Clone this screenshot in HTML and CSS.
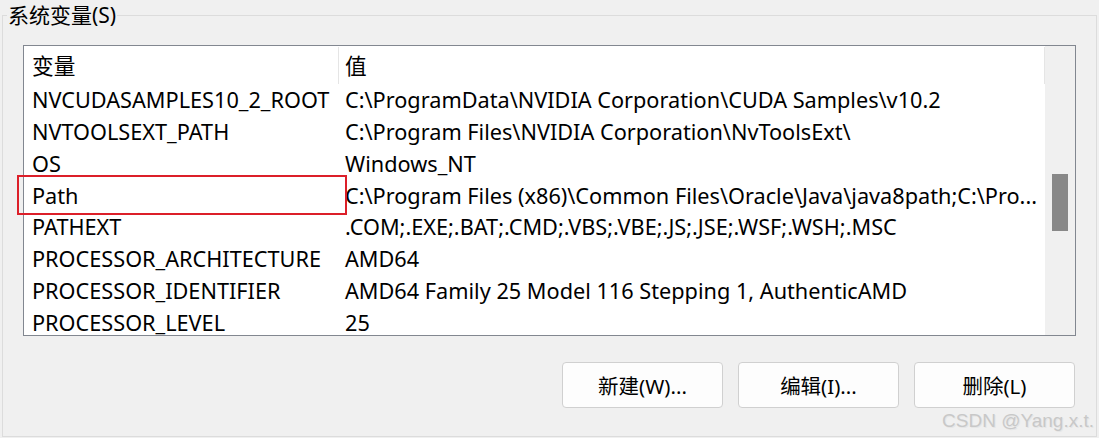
FILE: index.html
```html
<!DOCTYPE html>
<html lang="zh-CN">
<head>
<meta charset="utf-8">
<title>系统变量</title>
<link rel="stylesheet" href="styles.css">
</head>
<body>
<fieldset class="group">
  <legend class="group-title">系统变量(S)</legend>
  <div class="listview">
    <div class="lv-main">
      <div class="lv-header">
        <div class="cell col-name">变量</div>
        <div class="cell col-value">值</div>
      </div>
      <div class="lv-body">
        <div class="row"><div class="cell col-name">NVCUDASAMPLES10_2_ROOT</div><div class="cell col-value">C:\ProgramData\NVIDIA Corporation\CUDA Samples\v10.2</div></div>
        <div class="row"><div class="cell col-name">NVTOOLSEXT_PATH</div><div class="cell col-value">C:\Program Files\NVIDIA Corporation\NvToolsExt\</div></div>
        <div class="row"><div class="cell col-name">OS</div><div class="cell col-value">Windows_NT</div></div>
        <div class="row"><div class="cell col-name">Path</div><div class="cell col-value">C:\Program Files (x86)\Common Files\Oracle\Java\java8path;C:\Pro...</div></div>
        <div class="row"><div class="cell col-name">PATHEXT</div><div class="cell col-value">.COM;.EXE;.BAT;.CMD;.VBS;.VBE;.JS;.JSE;.WSF;.WSH;.MSC</div></div>
        <div class="row"><div class="cell col-name">PROCESSOR_ARCHITECTURE</div><div class="cell col-value">AMD64</div></div>
        <div class="row"><div class="cell col-name">PROCESSOR_IDENTIFIER</div><div class="cell col-value">AMD64 Family 25 Model 116 Stepping 1, AuthenticAMD</div></div>
        <div class="row"><div class="cell col-name">PROCESSOR_LEVEL</div><div class="cell col-value">25</div></div>
      </div>
    </div>
    <div class="scrollbar"><div class="thumb"></div></div>
    <div class="highlight"></div>
  </div>
  <div class="buttons">
    <button class="btn">新建(W)...</button>
    <button class="btn">编辑(I)...</button>
    <button class="btn">删除(L)</button>
  </div>
  <div class="watermark">CSDN @Yang.x.t.</div>
</fieldset>
</body>
</html>
```
FILE: styles.css
```css
html, body {
  margin: 0;
  padding: 0;
  background: #f0f0f0;
}
body {
  width: 1099px;
  height: 438px;
  overflow: hidden;
  font-family: "Noto Sans", "Noto Sans CJK SC", sans-serif;
  font-size: 21.7px;
  color: #000;
}
.group {
  position: relative;
  box-sizing: border-box;
  width: 1095px;
  height: 437px;
  margin: 0 0 0 2px;
  padding: 15px 20px 28px 20px;
  border: 1px solid #dcdcdc;
  min-width: 0;
}
.group-title {
  margin-left: -16px;
  padding: 0 1px;
  font-size: 21px;
  line-height: 30px;
  height: 30px;
  color: #000;
}
.listview {
  position: relative;
  box-sizing: border-box;
  height: 291px;
  border: 1px solid #828790;
  background: #fff;
  display: grid;
  grid-template-columns: 1fr 30px;
}
.lv-main {
  overflow: hidden;
  min-width: 0;
}
.lv-header {
  display: flex;
  height: 38px;
}
.lv-header .cell {
  height: 37px;
  margin-top: 1px;
  line-height: 37px;
  border-right: 1px solid #e5e5e5;
}
.cell {
  white-space: nowrap;
  overflow: hidden;
  box-sizing: border-box;
}
.col-name {
  width: 315px;
  padding-left: 8px;
  flex: none;
}
.col-value {
  padding-left: 6px;
  flex: 1;
  min-width: 0;
}
.lv-body {
  height: 251px;
  overflow: hidden;
}
.row {
  display: flex;
  height: 31.86px;
  line-height: 31.86px;
}
.scrollbar {
  background: #f0f0f0;
}
.thumb {
  width: 16px;
  height: 57px;
  margin: 128px 0 0 7px;
  background: #888888;
}
.highlight {
  position: absolute;
  left: -7px;
  top: 129px;
  width: 330px;
  height: 40px;
  box-sizing: border-box;
  border: 2px solid #dc1f29;
  pointer-events: none;
}
.buttons {
  display: flex;
  justify-content: flex-end;
  gap: 15px;
  margin: 26px 1px 0 0;
}
.btn {
  width: 161px;
  height: 46px;
  box-sizing: border-box;
  border: 1px solid #d0d0d0;
  border-radius: 4px;
  background: #fdfdfd;
  font-family: "Noto Sans", "Noto Sans CJK SC", sans-serif;
  font-size: 20.5px;
  color: #000;
  padding: 0;
}
.watermark {
  position: absolute;
  right: 2px;
  bottom: 4px;
  font-family: "Liberation Sans", Arial, sans-serif;
  font-size: 19px;
  color: #c8c8c8;
  text-shadow: 1px 1px 0 #e6e6e6;
}
```
